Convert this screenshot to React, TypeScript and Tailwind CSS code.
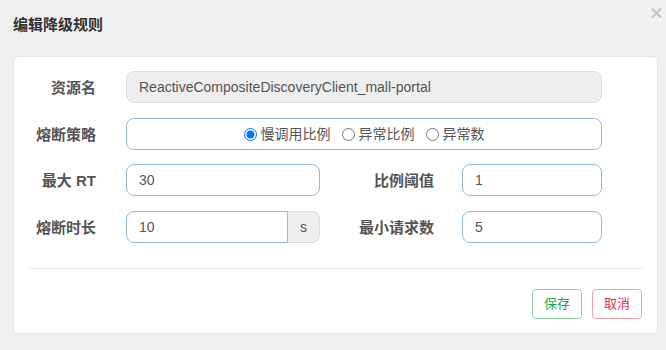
import { useState } from 'react';

const cjk = { fontFamily: '"Liberation Sans", "Noto Sans CJK SC", sans-serif' };

function Label({ text, width }: { text: string; width: string }) {
    return (
        <div className={`${width} shrink-0 text-right text-[15px] font-bold text-[#555] leading-none`}>{text}</div>
    );
}

export default function App() {
    const [strategy, setStrategy] = useState('slow');

    const options = [
        { key: 'slow', label: '慢调用比例' },
        { key: 'ratio', label: '异常比例' },
        { key: 'count', label: '异常数' },
    ];

    return (
        <div className="w-[666px] h-[350px] bg-[#f0f0f0] overflow-hidden relative" style={cjk}>
            {/* Header */}
            <div className="h-[56px] pl-[13px] pt-[15px]">
                <h3 className="text-[15px] font-bold text-[#333] leading-[20px]">编辑降级规则</h3>
            </div>
            <button className="absolute left-[650px] top-[8px] w-[12px] h-[10px] flex items-center justify-center text-[#c4c4c4]">
                <svg width="11" height="10" viewBox="0 0 11 10">
                    <path d="M1 0.5 L10 9.5 M10 0.5 L1 9.5" stroke="currentColor" strokeWidth="2" />
                </svg>
            </button>

            {/* Body */}
            <div className="ml-[13px] w-[645px] h-[278px] bg-white rounded-[5px] border border-[#e6e6e6] px-[15px] pt-[14px]">
                <div className="flex flex-col">
                    <div className="flex items-center">
                        <Label text="资源名" width="w-[67px]" />
                        <div className="ml-[30px] w-[476px] h-[32px] rounded-[8px] bg-[#eeeeee] border border-[#dddddd] px-[12px] flex items-center text-[14px] text-[#555]">
                            ReactiveCompositeDiscoveryClient_mall-portal
                        </div>
                    </div>

                    <div className="flex items-center mt-[15px]">
                        <Label text="熔断策略" width="w-[67px]" />
                        <div className="ml-[30px] w-[476px] h-[32px] rounded-[8px] border border-[#92bbe0] flex items-center justify-center gap-[11px] text-[14px] text-[#555]">
                            {options.map(o => (
                                <label key={o.key} className="flex items-center gap-[4px] cursor-pointer">
                                    <input
                                        type="radio"
                                        name="strategy"
                                        checked={strategy === o.key}
                                        onChange={() => setStrategy(o.key)}
                                        className="w-[13px] h-[13px] m-0"
                                    />
                                    <span>{o.label}</span>
                                </label>
                            ))}
                        </div>
                    </div>

                    <div className="flex items-center mt-[14px]">
                        <Label text="最大 RT" width="w-[67px]" />
                        <input
                            defaultValue="30"
                            className="ml-[30px] w-[194px] h-[32px] rounded-[8px] border border-[#92bbe0] px-[12px] text-[14px] text-[#555] outline-none"
                        />
                        <Label text="比例阈值" width="w-[114px]" />
                        <input
                            defaultValue="1"
                            className="ml-[28px] w-[140px] h-[32px] rounded-[8px] border border-[#92bbe0] px-[12px] text-[14px] text-[#555] outline-none"
                        />
                    </div>

                    <div className="flex items-center mt-[15px]">
                        <Label text="熔断时长" width="w-[67px]" />
                        <div className="ml-[30px] w-[194px] h-[32px] flex">
                            <input
                                defaultValue="10"
                                className="w-[162px] h-full rounded-l-[8px] border border-[#92bbe0] px-[12px] text-[14px] text-[#555] outline-none"
                            />
                            <div className="flex-1 h-full rounded-r-[8px] bg-[#eeeeee] border border-l-0 border-[#dddddd] flex items-center justify-center text-[14px] text-[#555]">
                                s
                            </div>
                        </div>
                        <Label text="最小请求数" width="w-[114px]" />
                        <input
                            defaultValue="5"
                            className="ml-[28px] w-[140px] h-[32px] rounded-[8px] border border-[#92bbe0] px-[12px] text-[14px] text-[#555] outline-none"
                        />
                    </div>
                </div>

                <div className="mt-[25px] border-t border-[#e5e5e5]" />

                <div className="flex justify-end gap-[10px] mt-[20px]">
                    <button className="w-[50px] h-[30px] rounded-[4px] border border-[#8fd19e] text-[13px] text-[#28a745] bg-white">保存</button>
                    <button className="w-[50px] h-[30px] rounded-[4px] border border-[#f1a1a8] text-[13px] text-[#dc3545] bg-white">取消</button>
                </div>
            </div>
        </div>
    );
}
